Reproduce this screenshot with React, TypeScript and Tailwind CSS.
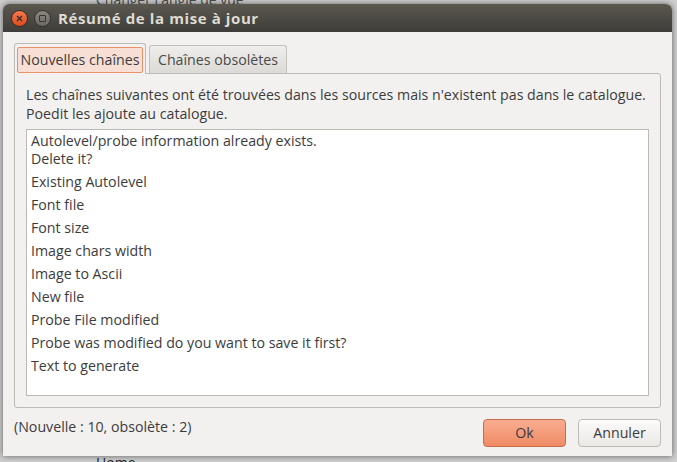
const items = [
  "Existing Autolevel",
  "Font file",
  "Font size",
  "Image chars width",
  "Image to Ascii",
  "New file",
  "Probe File modified",
  "Probe was modified do you want to save it first?",
  "Text to generate",
];

export default function App() {
  return (
    <div
      className="relative w-[677px] h-[462px] overflow-hidden bg-[#cfcfcf] text-[#3c3c3c]"
      style={{ fontFamily: '"Open Sans", "DejaVu Sans", sans-serif' }}
    >
      {/* window behind the dialog */}
      <div className="absolute left-[96px] top-[-11px] text-[14px] text-[#4c4c4c]">
        Changer l'angle de vue
      </div>
      <div className="absolute left-[96px] top-[452px] text-[14px] text-[#222]">Home</div>

      <div className="relative ml-[3px] mt-[4px] w-[669px] h-[452px] flex flex-col rounded-t-[6px] overflow-hidden bg-[#f2f1f0] shadow-[0_0_6px_rgba(0,0,0,0.55)]">
        {/* title bar */}
        <div className="h-[28px] flex items-center gap-[6px] pl-[8px] bg-gradient-to-b from-[#5b5850] to-[#3e3d39]">
          <span className="w-[17px] h-[17px] rounded-full bg-gradient-to-b from-[#f37a4d] to-[#dc4a1c] border border-[#3a2a22] flex items-center justify-center">
            <svg width="7" height="7" viewBox="0 0 7 7">
              <path d="M1 1L6 6M6 1L1 6" stroke="#3b2a22" strokeWidth="1.4" />
            </svg>
          </span>
          <span className="w-[17px] h-[17px] rounded-full bg-gradient-to-b from-[#8a8780] to-[#6a6862] border border-[#33322e] flex items-center justify-center">
            <span className="w-[7px] h-[7px] border border-[#35332f] rounded-[1px]" />
          </span>
          <span className="ml-[1px] text-[15px] font-bold text-[#dfdbd2] tracking-[0.6px]">
            Résumé de la mise à jour
          </span>
        </div>

        {/* body */}
        <div className="flex-1 flex flex-col px-[11px] pt-[10px] text-[14.2px]">
          {/* tabs */}
          <div className="flex items-end h-[31px]">
            <div className="h-[31px] w-[132px] bg-[#f2f1f0] border border-[#bdbbb8] border-b-0 rounded-t-[3px] px-[2px] pt-[3px] relative z-10 -mb-px">
              <div className="h-[26px] flex items-center justify-center rounded-[2px] border border-[#ea916a] bg-[#f8dfd5] text-[#3c3c3c]">
                Nouvelles chaînes
              </div>
            </div>
            <div className="ml-[3px] h-[28px] w-[138px] flex items-center justify-center border border-[#c3c1bd] border-b-0 rounded-t-[3px] bg-gradient-to-b from-[#efeeec] to-[#dcdad6] text-[#4a4a4a]">
              Chaînes obsolètes
            </div>
          </div>

          {/* panel */}
          <div className="h-[335px] border border-[#bdbbb8] rounded-b-[3px] rounded-tr-[3px] px-[11px] pt-[11px] flex flex-col">
            <p className="leading-[19px] text-[#3c3c3c]">
              Les chaînes suivantes ont été trouvées dans les sources mais n'existent pas dans le catalogue.
              <br />
              Poedit les ajoute au catalogue.
            </p>
            <div className="mt-[6px] h-[267px] bg-white border border-[#bcbab6] px-[4px] pt-[2px] text-[#3c3c3c]">
              <div className="leading-[18px] pb-[5px]">
                Autolevel/probe information already exists.
                <br />
                Delete it?
              </div>
              {items.map((t) => (
                <div key={t} className="h-[23px] leading-[18px]">
                  {t}
                </div>
              ))}
            </div>
          </div>

          {/* footer */}
          <div className="flex items-start mt-[11px]">
            <span className="text-[#3c3c3c] mt-[-3px]">(Nouvelle : 10, obsolète : 2)</span>
            <button className="ml-auto w-[83px] h-[28px] rounded-[4px] border border-[#c66c4b] bg-gradient-to-b from-[#f8ad91] to-[#f08a64] text-[#3c3c3c]">
              Ok
            </button>
            <button className="ml-[12px] w-[83px] h-[28px] rounded-[4px] border border-[#bdbbb8] bg-gradient-to-b from-[#fbfbfa] to-[#ebe9e6] text-[#3c3c3c]">
              Annuler
            </button>
          </div>
        </div>
      </div>
    </div>
  );
}
